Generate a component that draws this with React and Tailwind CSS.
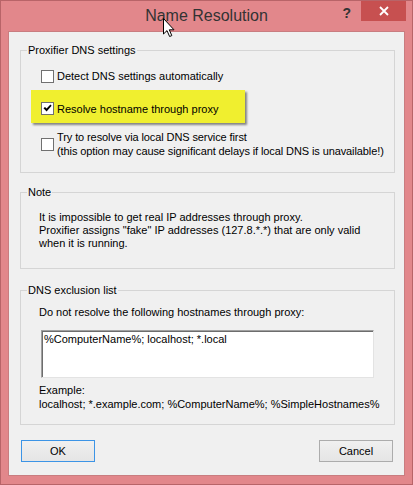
import React from 'react';

const ui = { fontFamily: '"Liberation Sans", Arial, sans-serif' };

function CheckBox({ checked }) {
    return (
        <span className="w-[13px] h-[13px] shrink-0 border border-[#707070] bg-white flex items-center justify-center">
            {checked && (
                <svg width="9" height="9" viewBox="0 0 9 9">
                    <path d="M0.5 4.2 L2 2.9 L3.6 4.6 L7.4 0.6 L8.6 1.8 L3.6 7.6 Z" fill="#000" />
                </svg>
            )}
        </span>
    );
}

function Group({ title, className = '', children }) {
    return (
        <fieldset className={`border border-[#d5d5d5] ${className}`}>
            <legend className="ml-[6px] px-[1px] leading-[14px]">{title}</legend>
            {children}
        </fieldset>
    );
}

export default function App() {
    return (
        <div className="w-[413px] h-[485px] bg-[#e2878b] border border-[#b86468] flex flex-col relative text-[11px] text-black" style={ui}>
            {/* Title bar */}
            <div className="h-[30px] grid grid-cols-[1fr_auto_1fr] shrink-0">
                <div />
                <div className="text-[16px] leading-[30px] text-[#333]">Name Resolution</div>
                <div className="flex justify-end items-start pr-[6px]">
                    <span className="text-[14px] font-bold text-[#333] leading-[14px] mt-[5px] mr-[10px]">?</span>
                    <div className="w-[45px] h-[20px] bg-[#c75050] flex items-center justify-center">
                        <svg width="10" height="10" viewBox="0 0 10 10">
                            <path d="M1 1 L9 9 M9 1 L1 9" stroke="#fff" strokeWidth="1.8" />
                        </svg>
                    </div>
                </div>
            </div>

            {/* Mouse cursor over the title */}
            <svg className="absolute left-[162px] top-[17px]" width="13" height="20" viewBox="0 0 13 20">
                <path d="M0.5 0.5 L0.5 16 L4 12.6 L6.6 18.5 L8.8 17.6 L6.3 11.8 L11 11.8 Z" fill="#fff" stroke="#000" strokeWidth="1" />
            </svg>

            {/* Client area */}
            <div className="mx-[7px] h-[445px] bg-[#f0f0f0] border border-[#c97d80] flex flex-col">
                <Group title="Proxifier DNS settings" className="mt-[11px] ml-[11px] mr-[9px] pb-[14px]">
                    <label className="flex items-center gap-[3px] ml-[20px] mt-[12px] leading-[14px]">
                        <CheckBox />
                        <span>Detect DNS settings automatically</span>
                    </label>
                    <div className="ml-[10px] mt-[7px] w-[214px] h-[33px] bg-[#f0ef2f] shadow-[2px_2px_2px_rgba(0,0,0,0.45)] flex items-center gap-[3px] pl-[10px] pt-[4px] leading-[14px]">
                        <CheckBox checked />
                        <span>Resolve hostname through proxy</span>
                    </div>
                    <label className="flex items-center gap-[3px] ml-[20px] mt-[7px] leading-[14px]">
                        <CheckBox />
                        <span className="tracking-[-0.1px]">
                            Try to resolve via local DNS service first
                            <br />
                            (this option may cause significant delays if local DNS is unavailable!)
                        </span>
                    </label>
                </Group>

                <Group title="Note" className="mt-[12px] ml-[11px] mr-[9px] pb-[18px]">
                    <p className="ml-[18px] mt-[12px] leading-[13px]">
                        It is impossible to get real IP addresses through proxy.
                        <br />
                        Proxifier assigns "fake" IP addresses (127.8.*.*) that are only valid
                        <br />
                        when it is running.
                    </p>
                </Group>

                <Group title="DNS exclusion list" className="mt-[14px] ml-[11px] mr-[9px] pb-[13px]">
                    <p className="ml-[18px] mt-[9px] leading-[13px]">Do not resolve the following hostnames through proxy:</p>
                    <div className="ml-[20px] mt-[11px] w-[333px] h-[48px] bg-white border border-t-[#a0a0a0] border-l-[#a0a0a0] border-r-[#e3e3e3] border-b-[#e3e3e3] shadow-[inset_1px_1px_0_#6d6d6d] pl-[2px] pt-[2px] leading-[13px]">
                        %ComputerName%; localhost; *.local
                    </div>
                    <p className="ml-[18px] mt-[5px] leading-[14px]">
                        Example:
                        <br />
                        localhost; *.example.com; %ComputerName%; %SimpleHostnames%
                    </p>
                </Group>

                <div className="flex justify-between ml-[12px] mr-[11px] mt-[15px]">
                    <button className="w-[74px] h-[22px] border border-[#3c94e6] bg-gradient-to-b from-[#f0f0f0] to-[#e5e5e5] text-[11px]">OK</button>
                    <button className="w-[74px] h-[22px] border border-[#acacac] bg-gradient-to-b from-[#f0f0f0] to-[#e5e5e5] text-[11px]">Cancel</button>
                </div>
            </div>
        </div>
    );
}
